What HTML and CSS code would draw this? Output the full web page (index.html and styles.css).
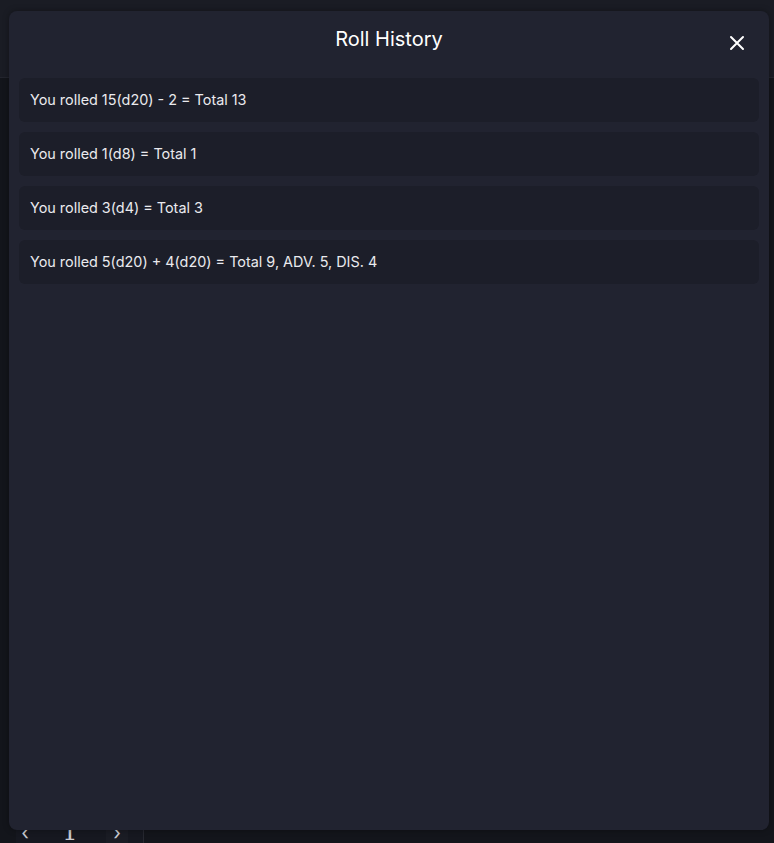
FILE: index.html
```html
<!DOCTYPE html>
<html>
<head>
<meta charset="utf-8">
<link rel="stylesheet" href="styles.css">
</head>
<body>
<div class="page">
  <header class="topbar"></header>
  <main class="content"></main>
  <nav class="pager">
    <span class="pager-btn">‹</span>
    <span class="pager-num">1</span>
    <span class="pager-btn pager-next">›</span>
    <span class="pager-end"></span>
  </nav>
</div>
<div class="modal">
  <div class="modal-head">
    <h2 class="modal-title">Roll History</h2>
    <button class="modal-close" aria-label="Close">
      <svg width="16" height="16" viewBox="0 0 16 16"><path d="M2 2L14 14M14 2L2 14" stroke="#ffffff" stroke-width="2" stroke-linecap="round"/></svg>
    </button>
  </div>
  <ul class="roll-list">
    <li class="roll">You rolled 15(d20) - 2 = Total 13</li>
    <li class="roll">You rolled 1(d8) = Total 1</li>
    <li class="roll">You rolled 3(d4) = Total 3</li>
    <li class="roll">You rolled 5(d20) + 4(d20) = Total 9, ADV. 5, DIS. 4</li>
  </ul>
</div>
</body>
</html>
```
FILE: styles.css
```css
* { box-sizing: border-box; }
html, body { margin: 0; padding: 0; }
body {
  width: 774px;
  height: 843px;
  overflow: hidden;
  background: #13151b;
  font-family: Inter, "Noto Sans", sans-serif;
  position: relative;
}
.page {
  display: flex;
  flex-direction: column;
  height: 843px;
}
.topbar {
  height: 78px;
  background: #1a1c24;
  border-bottom: 1px solid #23252e;
}
.content { flex: 1; }
.pager {
  display: flex;
  align-items: flex-start;
  height: 22px;
  margin-left: 16px;
  width: 128px;
  background: #161820;
  color: #c9cad0;
  font-size: 20px;
  line-height: 24px;
}
.pager-btn {
  width: 18px;
  height: 22px;
  text-align: center;
}
.pager-num {
  width: 72px;
  height: 22px;
  text-align: center;
  font-family: "DejaVu Serif", serif;
  font-size: 24px;
  line-height: 22px;
}
.pager-next {
  width: 22px;
  background: #1a1c24;
}
.pager-end {
  flex: 1;
  height: 22px;
  border-right: 1px solid #262830;
}
.modal {
  position: absolute;
  left: 9px;
  top: 11px;
  width: 760px;
  height: 819px;
  background: #212330;
  border-radius: 8px;
  box-shadow: 0 0 6px rgba(0,0,0,0.35);
  display: flex;
  flex-direction: column;
}
.modal-head {
  height: 67px;
  display: flex;
  align-items: center;
  justify-content: center;
  position: relative;
}
.modal-title {
  margin: 0;
  font-weight: 400;
  font-size: 20px;
  color: #ffffff;
  margin-top: -12px;
}
.modal-close {
  position: absolute;
  right: 24px;
  top: 24px;
  background: none;
  border: 0;
  padding: 0;
  width: 16px;
  height: 16px;
  display: flex;
}
.roll-list {
  list-style: none;
  margin: 0;
  padding: 0 10px;
  display: flex;
  flex-direction: column;
  gap: 10px;
}
.roll {
  height: 44px;
  display: flex;
  align-items: center;
  padding: 0 11px 1px;
  background: #1c1e29;
  border-radius: 6px;
  color: #eaeaee;
  font-size: 14.4px;
}
```
